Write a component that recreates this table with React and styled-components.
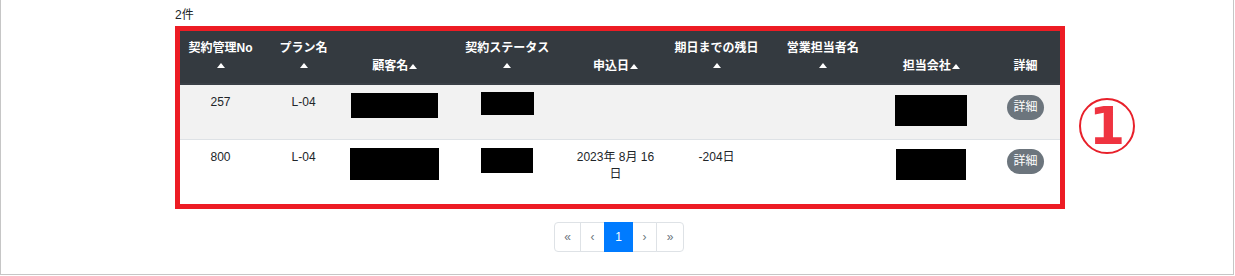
import styled, { createGlobalStyle, css } from 'styled-components';

const GlobalStyle = createGlobalStyle`
  body {
    margin: 0;
    background: #fff;
    font-family: "Liberation Sans", "Noto Sans CJK JP", sans-serif;
    color: #212529;
  }
`;

const Panel = styled.div`
  box-sizing: border-box;
  width: 1234px;
  height: 275px;
  border: 1px solid #c6c6c6;
  border-top: none;
  padding-top: 8px;
`;

const Content = styled.div`
  position: relative;
  width: 890px;
  margin-left: 174px;
`;

const Count = styled.div`
  font-size: 12px;
  line-height: 14px;
  margin-bottom: 4px;
`;

const Highlight = styled.div`
  border: 5px solid #ed1c24;
`;

const Table = styled.table`
  width: 100%;
  table-layout: fixed;
  border-collapse: collapse;
`;

const Th = styled.th`
  background: #343a40;
  color: #fff;
  font-size: 12px;
  font-weight: bold;
  line-height: 18px;
  padding: 8px 2px;
  vertical-align: bottom;
  text-align: center;
  border-bottom: 2px solid #3a4047;
`;

// small up-pointing sort caret drawn with borders
const SortMark = styled.span`
  width: 0;
  height: 0;
  border-left: 4px solid transparent;
  border-right: 4px solid transparent;
  border-bottom: 5px solid #fff;
  ${({ $below }) => ($below
    ? css`
      display: block;
      margin: 6px auto 7px;
    `
    : css`
      display: inline-block;
      vertical-align: 1px;
      margin-left: 1px;
    `)}
`;

const Tr = styled.tr`
  height: ${({ $height }) => $height}px;
  background: ${({ $striped }) => ($striped ? '#f2f2f2' : '#fff')};
`;

const Td = styled.td`
  padding: 9px 4px 0;
  border-top: 1px solid #dee2e6;
  vertical-align: top;
  text-align: center;
  font-size: 12px;
  line-height: 17px;
`;

const Redacted = styled.span`
  display: inline-block;
  vertical-align: top;
  background: #000;
  width: ${({ $w }) => $w}px;
  height: ${({ $h }) => $h}px;
  margin-top: ${({ $dy = 0 }) => $dy}px;
`;

const DetailButton = styled.button`
  width: 37px;
  height: 25px;
  margin-top: ${({ $dy = 0 }) => $dy}px;
  padding: 0;
  border: none;
  border-radius: 13px;
  background: #6c757d;
  color: #fff;
  font-family: inherit;
  font-size: 12px;
  line-height: 25px;
  cursor: pointer;
`;

const Pager = styled.ul`
  display: flex;
  justify-content: center;
  list-style: none;
  margin: 13px 2px 0 0;
  padding: 0;
`;

const PageItem = styled.li`
  box-sizing: border-box;
  width: ${({ $w }) => $w}px;
  height: 30px;
  margin-left: -1px;
  display: flex;
  align-items: center;
  justify-content: center;
  border: 1px solid ${({ $active }) => ($active ? '#007bff' : '#dee2e6')};
  background: ${({ $active }) => ($active ? '#007bff' : '#fff')};
  color: ${({ $active }) => ($active ? '#fff' : '#6c757d')};
  font-size: 12px;
  position: relative;
  z-index: ${({ $active }) => ($active ? 1 : 0)};

  &:first-child {
    margin-left: 0;
    border-radius: 4px 0 0 4px;
  }
  &:last-child {
    border-radius: 0 4px 4px 0;
  }
`;

const Marker = styled.div`
  position: absolute;
  left: 904px;
  top: 90px;
  box-sizing: border-box;
  width: 56px;
  height: 56px;
  border: 2px solid #e8202a;
  border-radius: 50%;
  display: flex;
  align-items: center;
  justify-content: center;
  color: #ef3340;
  font-family: "DejaVu Sans", sans-serif;
  font-weight: bold;
  font-size: 52px;
  line-height: 1;
`;

const columns = [
  { label: '契約管理No', width: 81, below: true },
  { label: 'プラン名', width: 85, below: true },
  { label: '顧客名', width: 97 },
  { label: '契約ステータス', width: 128, below: true },
  { label: '申込日', width: 88 },
  { label: '期日までの残日', width: 114, below: true },
  { label: '営業担当者名', width: 98, below: true },
  { label: '担当会社', width: 119 },
  { label: '詳細', width: 69, noSort: true },
];

const contracts = [
  {
    no: 257, plan: 'L-04', applied: '', remaining: '', height: 55,
    customer: { w: 87, h: 25, dy: -1 },
    status: { w: 53, h: 23, dy: -2 },
    company: { w: 72, h: 31, dy: 1 },
    buttonDy: 1,
  },
  {
    no: 800, plan: 'L-04', applied: '2023年 8月 16日', remaining: '-204日', height: 65,
    customer: { w: 89, h: 32, dy: -1 },
    status: { w: 52, h: 25, dy: -1 },
    company: { w: 70, h: 31, dy: 0 },
    buttonDy: 0,
  },
];

export default function App() {
  return (
    <>
      <GlobalStyle />
      <Panel>
        <Content>
          <Count>{contracts.length}件</Count>
          <Highlight>
            <Table>
              <colgroup>
                {columns.map((c) => <col key={c.label} style={{ width: c.width }} />)}
              </colgroup>
              <thead>
                <tr>
                  {columns.map((c) => (
                    <Th key={c.label}>
                      {c.label}
                      {!c.noSort && <SortMark $below={c.below} />}
                    </Th>
                  ))}
                </tr>
              </thead>
              <tbody>
                {contracts.map((row, i) => (
                  <Tr key={row.no} $height={row.height} $striped={i % 2 === 0}>
                    <Td>{row.no}</Td>
                    <Td>{row.plan}</Td>
                    <Td><Redacted $w={row.customer.w} $h={row.customer.h} $dy={row.customer.dy} /></Td>
                    <Td><Redacted $w={row.status.w} $h={row.status.h} $dy={row.status.dy} /></Td>
                    <Td>{row.applied}</Td>
                    <Td>{row.remaining}</Td>
                    <Td></Td>
                    <Td><Redacted $w={row.company.w} $h={row.company.h} $dy={row.company.dy} /></Td>
                    <Td><DetailButton $dy={row.buttonDy}>詳細</DetailButton></Td>
                  </Tr>
                ))}
              </tbody>
            </Table>
          </Highlight>
          <Pager>
            <PageItem $w={27}>«</PageItem>
            <PageItem $w={25}>‹</PageItem>
            <PageItem $w={29} $active>1</PageItem>
            <PageItem $w={25}>›</PageItem>
            <PageItem $w={28}>»</PageItem>
          </Pager>
          <Marker>1</Marker>
        </Content>
      </Panel>
    </>
  );
}
